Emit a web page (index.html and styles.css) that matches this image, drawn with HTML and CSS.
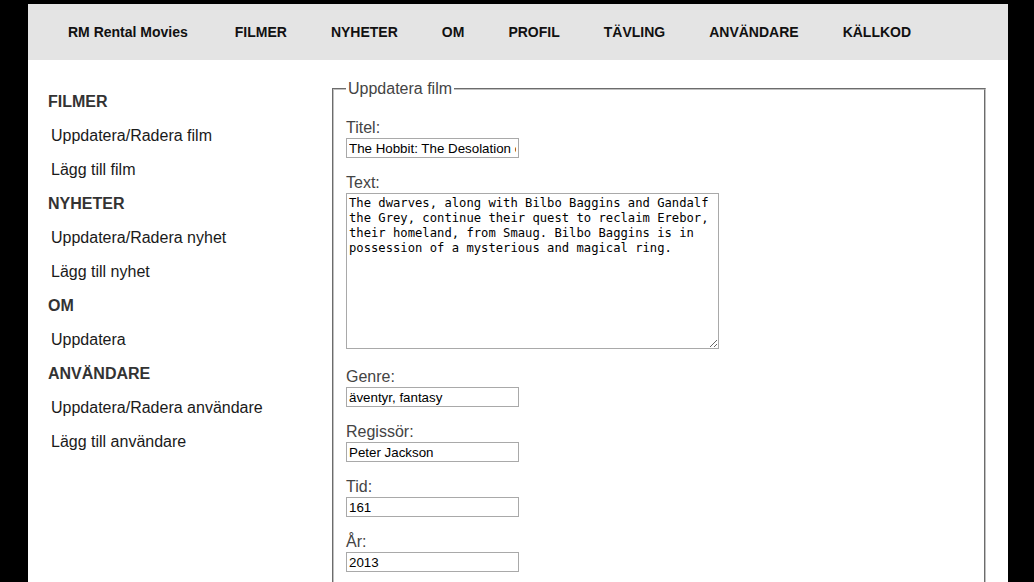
FILE: index.html
```html
<!DOCTYPE html>
<html lang="sv">
<head>
<meta charset="utf-8">
<title>RM Rental Movies</title>
<link rel="stylesheet" href="styles.css">
</head>
<body>
<div class="page">
  <nav class="topnav">
    <a class="brand" href="#">RM Rental Movies</a>
    <a href="#">FILMER</a>
    <a href="#">NYHETER</a>
    <a href="#">OM</a>
    <a href="#">PROFIL</a>
    <a href="#">TÄVLING</a>
    <a href="#">ANVÄNDARE</a>
    <a href="#">KÄLLKOD</a>
  </nav>
  <div class="content">
    <aside class="sidebar">
      <ul class="side-list">
        <li class="side-head">FILMER</li>
        <li class="side-link"><a href="#">Uppdatera/Radera film</a></li>
        <li class="side-link"><a href="#">Lägg till film</a></li>
        <li class="side-head">NYHETER</li>
        <li class="side-link"><a href="#">Uppdatera/Radera nyhet</a></li>
        <li class="side-link"><a href="#">Lägg till nyhet</a></li>
        <li class="side-head">OM</li>
        <li class="side-link"><a href="#">Uppdatera</a></li>
        <li class="side-head">ANVÄNDARE</li>
        <li class="side-link"><a href="#">Uppdatera/Radera användare</a></li>
        <li class="side-link"><a href="#">Lägg till användare</a></li>
      </ul>
    </aside>
    <main class="main">
      <form class="film-form">
        <fieldset class="box">
          <legend class="box-title">Uppdatera film</legend>
          <div class="field">
            <label class="lbl" for="titel">Titel:</label>
            <input class="txt" id="titel" type="text" value="The Hobbit: The Desolation of Smaug">
          </div>
          <div class="field field-area">
            <label class="lbl" for="text">Text:</label>
            <textarea class="area" id="text">The dwarves, along with Bilbo Baggins and Gandalf the Grey, continue their quest to reclaim Erebor, their homeland, from Smaug. Bilbo Baggins is in possession of a mysterious and magical ring.</textarea>
          </div>
          <div class="field">
            <label class="lbl" for="genre">Genre:</label>
            <input class="txt" id="genre" type="text" value="äventyr, fantasy">
          </div>
          <div class="field">
            <label class="lbl" for="regi">Regissör:</label>
            <input class="txt" id="regi" type="text" value="Peter Jackson">
          </div>
          <div class="field">
            <label class="lbl" for="tid">Tid:</label>
            <input class="txt" id="tid" type="text" value="161">
          </div>
          <div class="field">
            <label class="lbl" for="ar">År:</label>
            <input class="txt" id="ar" type="text" value="2013">
          </div>
        </fieldset>
      </form>
    </main>
  </div>
</div>
</body>
</html>
```

FILE: styles.css
```css
html, body {
  margin: 0;
  padding: 0;
  background: #000;
}

body {
  padding: 4px 0 0 28px;
  font-family: "Liberation Sans", Arial, sans-serif;
}

.page {
  width: 980px;
  background: #fff;
  min-height: 700px;
}

.topnav {
  height: 56px;
  background: #e4e4e4;
  display: flex;
  align-items: center;
  gap: 44px;
  padding-left: 40px;
}

.topnav a {
  font-size: 14px;
  font-weight: bold;
  color: #111;
  text-decoration: none;
}

.topnav .brand {
  margin-right: 3px;
}

.content {
  display: flex;
  padding: 20px 20px 0 20px;
}

.sidebar {
  width: 282px;
  flex: none;
  padding-top: 5px;
}

.side-list {
  list-style: none;
  margin: 0;
  padding: 0;
}

.side-list li {
  font-size: 16px;
  line-height: 18px;
  padding: 8px 0;
}

.side-head {
  font-weight: bold;
  color: #333;
}

.side-link {
  padding-left: 3px !important;
}

.side-link a {
  color: #1a1a1a;
  text-decoration: none;
}

.main {
  flex: 1;
}

.film-form {
  margin: 0;
}

.box {
  margin: 0 2px;
  padding: 21px 12px 10px;
  border: 2px groove rgb(192, 192, 192);
  min-width: 0;
}

.box-title {
  font-size: 16px;
  color: #444;
  padding: 0 2px;
}

.field {
  display: flex;
  flex-direction: column;
  align-items: flex-start;
  margin-bottom: 16px;
}

.field-area {
  margin-bottom: 19px;
}

.lbl {
  font-size: 16px;
  line-height: 18px;
  color: #444;
  margin-bottom: 1px;
}

.txt {
  box-sizing: border-box;
  width: 173px;
  height: 20px;
  margin: 0;
  padding: 1px 2px;
  border: 1px solid #a9a9a9;
  font-family: "Liberation Sans", Arial, sans-serif;
  font-size: 13.33px;
  color: #000;
  background: #fff;
  outline: none;
}

.area {
  box-sizing: border-box;
  width: 373px;
  height: 156px;
  margin: 0;
  padding: 2px;
  border: 1px solid #a9a9a9;
  font-family: "DejaVu Sans Mono", "Liberation Mono", monospace;
  font-size: 12.2px;
  line-height: 15px;
  color: #000;
  background: #fff;
  outline: none;
}
```
